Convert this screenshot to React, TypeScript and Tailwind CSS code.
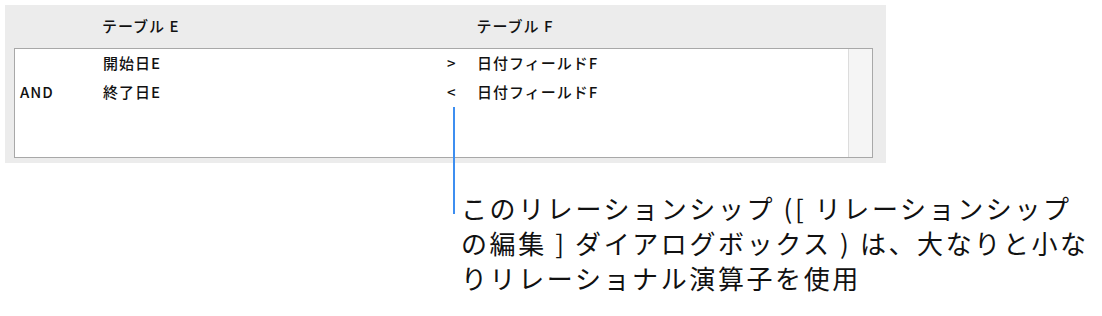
import React from 'react'

type Row = { conj: string; left: string; op: string; right: string }

const rows: Row[] = [
  { conj: '', left: '開始日E', op: '>', right: '日付フィールドF' },
  { conj: 'AND', left: '終了日E', op: '<', right: '日付フィールドF' },
]

const jp = { fontFamily: '"Noto Sans CJK JP", "Noto Sans", sans-serif' }

export default function App() {
  return (
    <div className="relative h-[316px] w-[1102px] overflow-hidden bg-white text-black" style={jp}>
      {/* Relationship panel */}
      <div className="ml-[5px] mt-[5px] flex h-[158px] w-[881px] flex-col bg-[#ececec] pb-[5px] pl-[9px] pr-[13px]">
        <div className="flex h-[43px] items-center text-[15px] font-medium tracking-[1px] text-[#111]">
          <span className="ml-[88px]">テーブル E</span>
          <span className="ml-[297px]">テーブル F</span>
        </div>
        <div className="flex flex-1 border border-[#a8a8a8] bg-white">
          <div className="flex-1">
            {rows.map((r, i) => (
              <div key={i} className="flex h-[29px] items-center text-[15px] font-medium tracking-[1px] text-[#111]">
                <span className="w-[88px] pl-[5px]">{r.conj}</span>
                <span className="w-[344px]">{r.left}</span>
                <span className="w-[30px]">{r.op}</span>
                <span>{r.right}</span>
              </div>
            ))}
          </div>
          <div className="w-[24px] border-l border-[#dcdcdc] bg-[#f5f5f5]" />
        </div>
      </div>

      {/* Callout */}
      <div className="ml-[461px] mt-[27px] text-[26px] leading-[35px] tracking-[0.1em] text-[#111]">
        <p>このリレーションシップ ([ リレーションシップ</p>
        <p>の編集 ] ダイアログボックス ) は、大なりと小な</p>
        <p>りリレーショナル演算子を使用</p>
      </div>

      {/* Leader line */}
      <div className="absolute left-[453px] top-[107px] h-[107px] w-[2px] bg-[#3d8ef0]" />
    </div>
  )
}
